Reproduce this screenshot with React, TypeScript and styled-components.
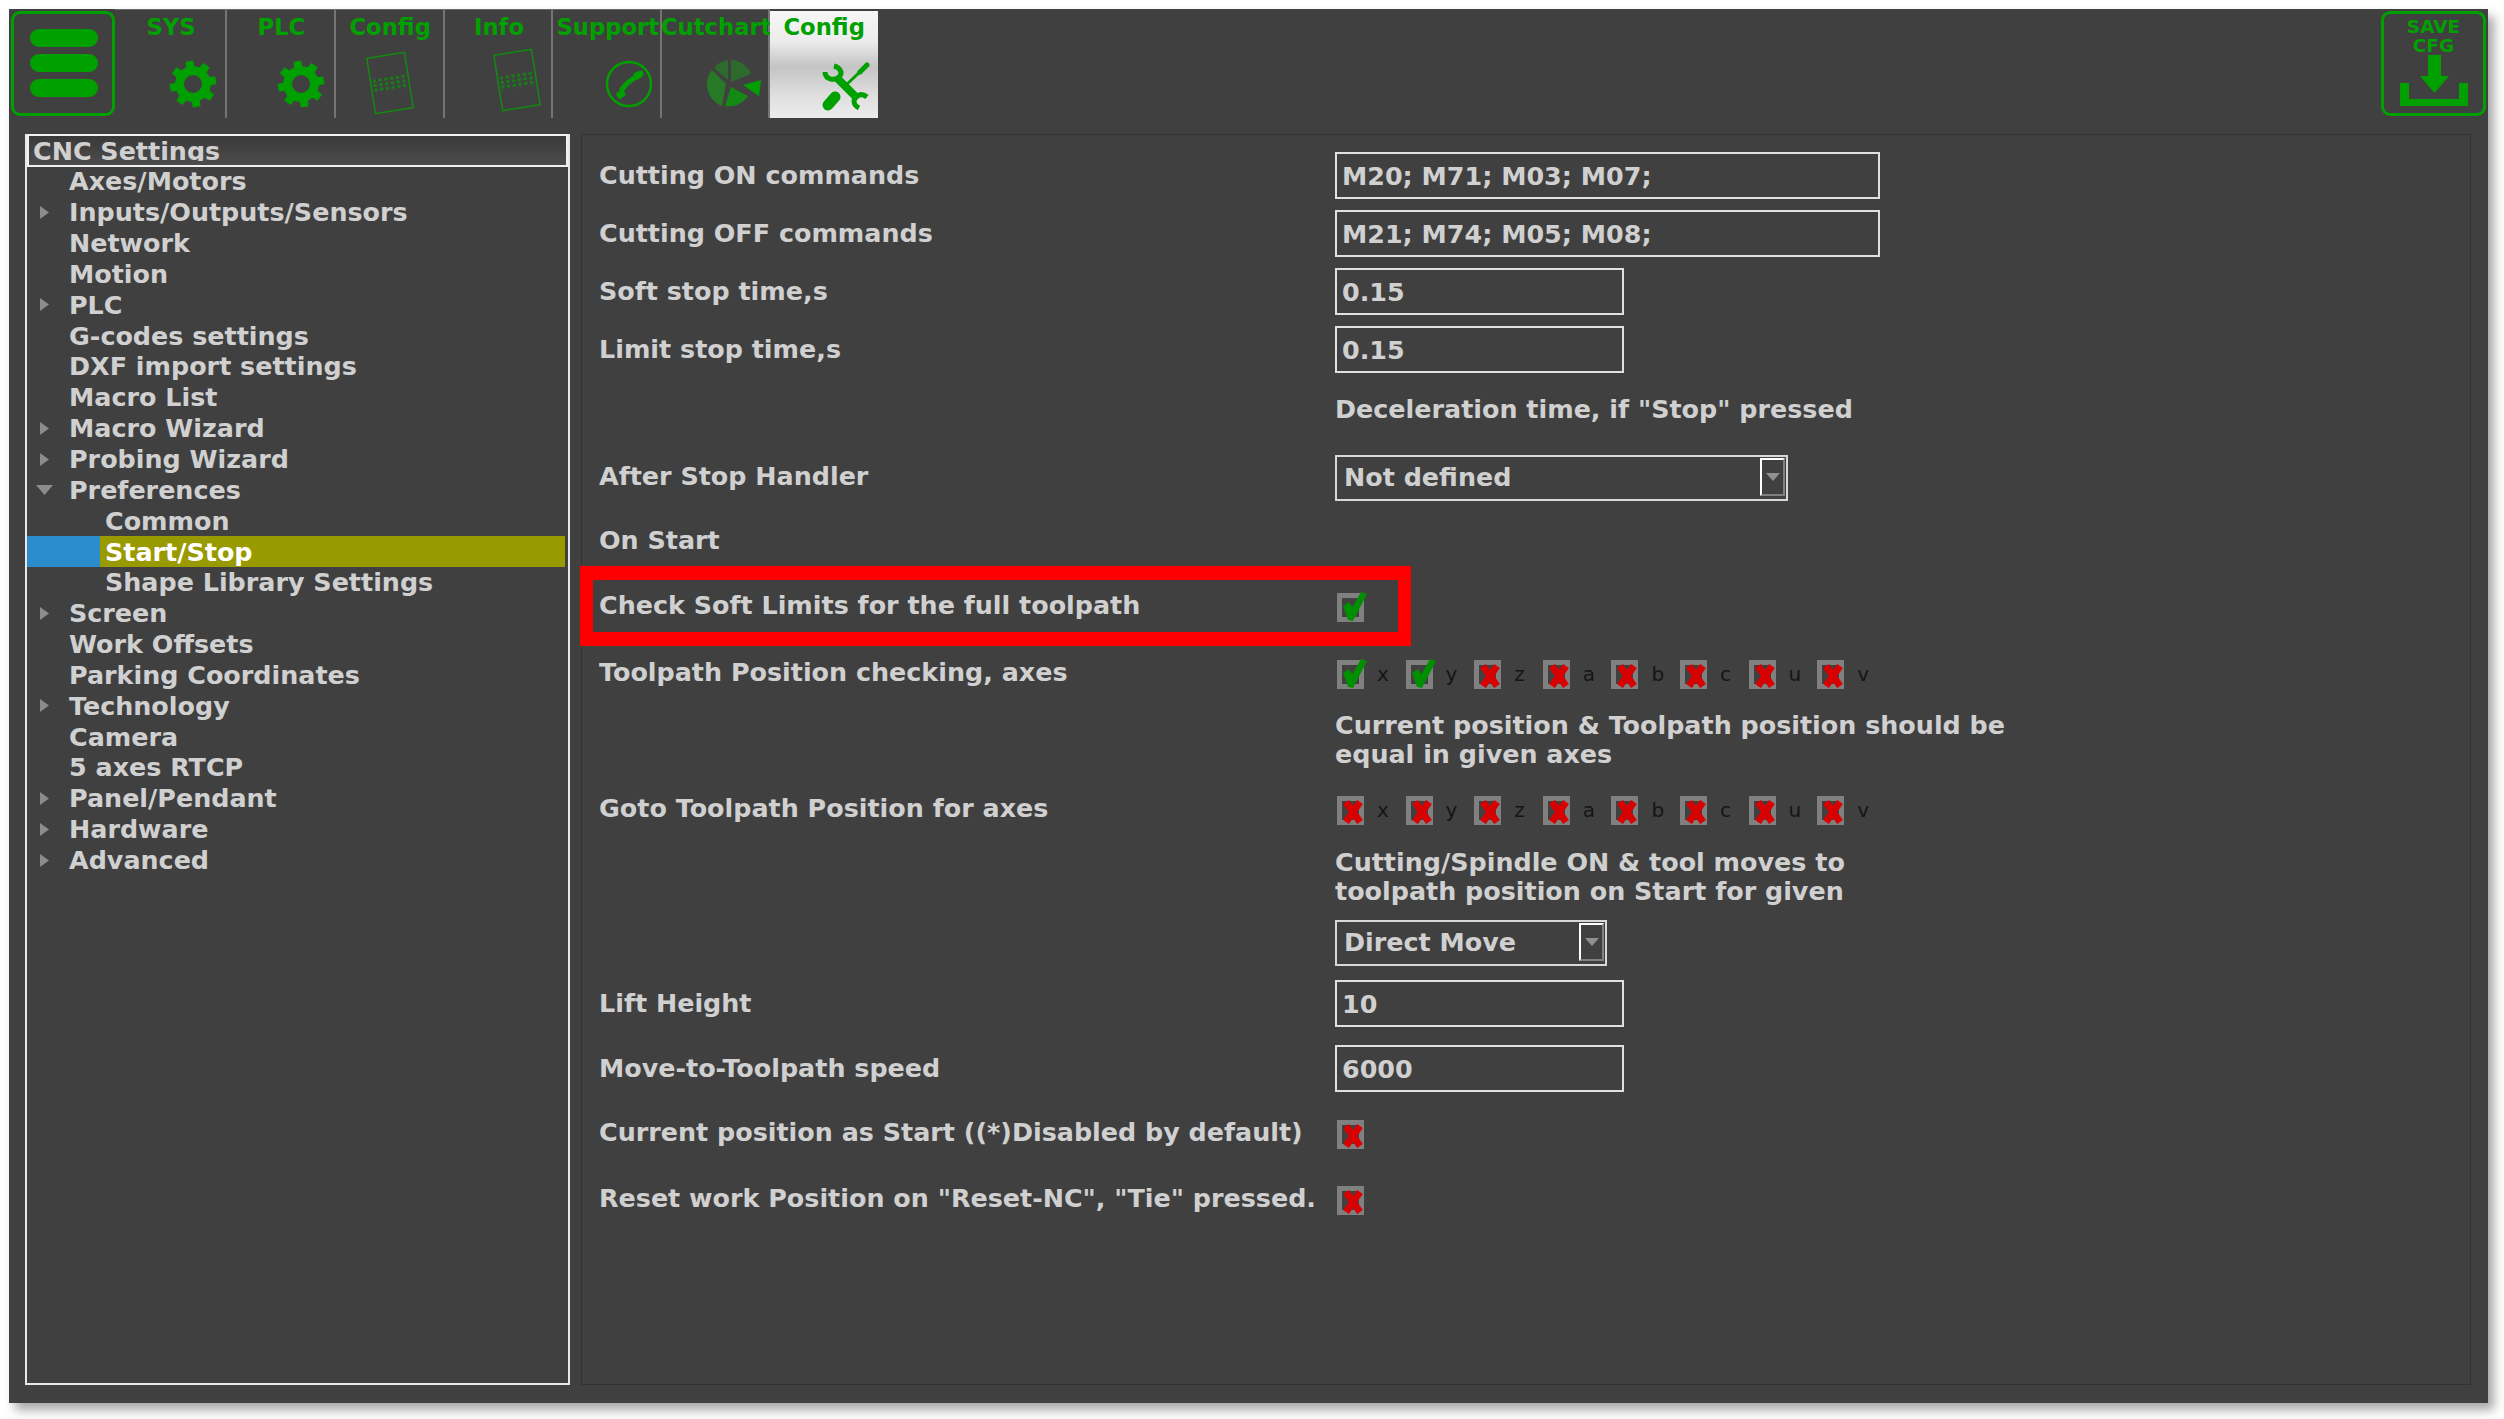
import React from "react";
import styled, { createGlobalStyle } from "styled-components";

const Global = createGlobalStyle`
  html, body { margin: 0; padding: 0; background: #fff; width: 2504px; height: 1419px; overflow: hidden; }
  * { box-sizing: border-box; }
`;

const GREEN = "#00a000";
const FS = "25.4px";

const Page = styled.div`
  width: 2504px;
  height: 1419px;
  padding: 9px 16px 16px 9px;
  font-family: "DejaVu Sans", sans-serif;
`;
const Win = styled.div`
  width: 2479px;
  height: 1394px;
  background: #404040;
  box-shadow: 6px 7px 10px rgba(0, 0, 0, 0.35);
  display: flex;
  flex-direction: column;
`;
const Toolbar = styled.div`
  height: 125px;
  display: flex;
  align-items: flex-start;
`;
const MenuBtn = styled.div`
  width: 104px;
  height: 105px;
  margin: 2px 0 0 2px;
  border: 3px solid ${GREEN};
  border-radius: 9px;
  display: flex;
  flex-direction: column;
  gap: 7px;
  padding: 15px 14px 0 16px;
  flex: none;
`;
const MenuBar = styled.div`
  height: 18px;
  border-radius: 9px;
  background: ${GREEN};
`;
const Tab = styled.div<{ $active?: boolean; $w?: number }>`
  width: ${(p) => p.$w ?? 108.8}px;
  height: ${(p) => (p.$active ? 107 : 109)}px;
  margin-top: ${(p) => (p.$active ? 2 : 0)}px;
  padding-left: ${(p) => (p.$active ? 0 : 2)}px;
  flex: none;
  display: flex;
  flex-direction: column;
  align-items: center;
  color: ${GREEN};
  font-size: 22.7px;
  font-weight: 700;
  line-height: 30px;
  white-space: nowrap;
  border-right: ${(p) => (p.$active ? "none" : "2px solid #747474")};
  border-top: ${(p) => (p.$active ? "none" : "1px solid #6a6a6a")};
  background: ${(p) =>
    p.$active ? "linear-gradient(#f6f6f6 0%, #ececec 28%, #c4c4c4 52%, #dedede 78%, #ececec 100%)" : "transparent"};
`;
const TabLabel = styled.div<{ $active?: boolean }>`
  flex: none;
  height: ${(p) => (p.$active ? 32 : 33)}px;
  padding-top: ${(p) => (p.$active ? 1 : 2)}px;
`;
const TabIcon = styled.svg<{ $dx: number; $top: number }>`
  margin-left: ${(p) => p.$dx}px;
  margin-top: ${(p) => p.$top}px;
  flex: none;
`;
const Spacer = styled.div`
  flex: 1;
`;
const SaveBtn = styled.div`
  width: 105px;
  height: 105px;
  border: 3px solid ${GREEN};
  border-radius: 9px;
  color: ${GREEN};
  font-size: 18.5px;
  line-height: 19px;
  font-weight: 700;
  text-align: center;
  margin: 2px 2px 0 0;
  display: flex;
  flex-direction: column;
  align-items: center;
  padding-top: 3px;
  flex: none;
`;
const SaveIcon = styled.svg`
  flex: none;
`;
const Main = styled.div`
  flex: 1;
  display: flex;
  padding: 0 17px 18px 16px;
  gap: 11px;
  align-items: stretch;
`;
const Tree = styled.div`
  width: 545px;
  border: 2px solid #e8e8e8;
  border-top: none;
  flex: none;
  display: flex;
  flex-direction: column;
`;
const TreeHeader = styled.div`
  height: 33px;
  margin-bottom: -1px;
  border: 2px solid #f0f0f0;
  background: linear-gradient(#3a3a3a, #4c4c4c);
  flex: none;
`;
const TreeHeaderText = styled.div`
  height: 25px;
  overflow: hidden;
  color: #d0d0d0;
  font-weight: 700;
  font-size: ${FS};
  line-height: 31px;
  padding-left: 4px;
  white-space: nowrap;
`;
const TreeRow = styled.div<{ $level: number; $sel?: boolean }>`
  height: 30.85px;
  position: relative;
  display: flex;
  align-items: center;
  color: ${(p) => (p.$sel ? "#ffffff" : "#d0d0d0")};
  font-weight: 700;
  font-size: ${FS};
  white-space: nowrap;
  padding-left: ${(p) => (p.$level === 2 ? 78 : 42)}px;
  flex: none;
  margin-right: ${(p) => (p.$sel ? 3 : 0)}px;
  background: ${(p) =>
    p.$sel ? "linear-gradient(90deg, #2d8ccb 0, #2d8ccb 73px, #999900 73px, #999900 100%)" : "transparent"};
`;
const TreeArrow = styled.svg`
  position: absolute;
  left: 9px;
  top: 8px;
`;
const Pane = styled.div`
  flex: 1;
  border: 1px solid #333333;
  padding-top: 13px;
  padding-left: 17px;
  position: relative;
`;
const FormRow = styled.div<{ $h: number }>`
  height: ${(p) => p.$h}px;
  display: flex;
  align-items: center;
`;
const Label = styled.div`
  width: 736px;
  flex: none;
  color: #d0d0d0;
  font-weight: 700;
  font-size: ${FS};
  white-space: nowrap;
  position: relative;
  top: -2px;
`;
const Input = styled.div<{ $w: number }>`
  width: ${(p) => p.$w}px;
  height: 47px;
  border: 2px solid #e0e0e0;
  color: #d0d0d0;
  font-weight: 700;
  font-size: ${FS};
  line-height: 44px;
  padding-left: 5px;
  white-space: nowrap;
  position: relative;
  top: -2px;
`;
const Combo = styled.div<{ $w: number }>`
  width: ${(p) => p.$w}px;
  height: 46px;
  border: 2px solid #d8d8d8;
  color: #d0d0d0;
  font-weight: 700;
  font-size: ${FS};
  line-height: 41px;
  padding-left: 7px;
  display: flex;
  justify-content: space-between;
`;
const ComboBtn = styled.div`
  width: 25px;
  height: 38px;
  margin: 1px 1px 0 0;
  border: 2px solid #ffffff;
  border-right-color: #808080;
  border-bottom-color: #808080;
  display: flex;
  align-items: center;
  justify-content: center;
`;
const Help = styled.div`
  color: #d0d0d0;
  font-weight: 700;
  font-size: ${FS};
  line-height: 29.5px;
  white-space: pre;
  position: relative;
  top: -1px;
`;
const Axes = styled.div`
  display: flex;
`;
const Axis = styled.div`
  width: 68.6px;
  display: flex;
  align-items: center;
  gap: 13px;
  color: #151515;
  font-size: 20px;
  font-weight: 400;
`;
const CheckBox = styled.div`
  width: 27px;
  height: 29px;
  margin-left: 2px;
  border: 5px solid #808080;
  position: relative;
  flex: none;
`;
const Mark = styled.svg`
  position: absolute;
  left: -5px;
  top: -7px;
`;
const RedBox = styled.div`
  position: absolute;
  left: -2px;
  top: 431px;
  width: 831px;
  height: 80px;
  border-style: solid;
  border-color: #ff0000;
  border-width: 14px 13px;
  pointer-events: none;
`;

const gearPath = (() => {
  const n = 8;
  const cx = 24, cy = 24;
  const ro = 23.5, ri = 18;
  const rot = -0.16;
  let d = "";
  for (let i = 0; i < n; i++) {
    const a = (i / n) * Math.PI * 2 + rot;
    const w = Math.PI / n;
    const pts = [
      [ri, a - w * 0.6],
      [ro, a - w * 0.42],
      [ro, a + w * 0.42],
      [ri, a + w * 0.6],
    ];
    pts.forEach(([r, t], j) => {
      const x = (cx + r * Math.sin(t)).toFixed(2);
      const y = (cy - r * Math.cos(t)).toFixed(2);
      d += `${i === 0 && j === 0 ? "M" : "L"}${x} ${y} `;
    });
  }
  d += "Z M24 15 A9 9 0 1 0 24 33 A9 9 0 1 0 24 15 Z";
  return d;
})();

const Gear = ({ dx }: { dx: number }) => (
  <TabIcon $dx={dx} $top={17} width="48" height="48" viewBox="0 0 48 48">
    <path d={gearPath} fill={GREEN} fillRule="evenodd" />
  </TabIcon>
);

const Chip = ({ dx, top }: { dx: number; top: number }) => (
  <TabIcon $dx={dx} $top={top} width="60" height="66" viewBox="0 0 60 66">
    <g transform="rotate(-9 30 33)" fill="none" stroke="#128a12">
      <rect x="11" y="5" width="38" height="56" strokeWidth="1.5" />
      {[0, 1, 2, 3, 4, 5].map((i) => (
        <line
          key={i}
          x1={15 + i * 5.8}
          x2={15 + i * 5.8}
          y1="27"
          y2="41"
          strokeWidth="3.4"
          strokeDasharray="3 1.6"
          stroke="#1a7a1a"
        />
      ))}
    </g>
  </TabIcon>
);

const Phone = () => (
  <TabIcon $dx={42} $top={17} width="48" height="48" viewBox="0 0 48 48">
    <circle cx="24" cy="24" r="22" fill="none" stroke={GREEN} strokeWidth="2.4" />
    <path d="M16 31 C20 24 25 20 33 16" fill="none" stroke={GREEN} strokeWidth="5" />
    <path d="M11 33 L18 29 L21 35 L15 39 Q12 38 11 33 Z" fill={GREEN} />
    <path d="M28 14 Q33 10 38 11 Q39 15 37 17 L32 20 Z" fill={GREEN} />
  </TabIcon>
);

const Pie = () => (
  <TabIcon $dx={37} $top={16} width="56" height="50" viewBox="0 0 56 50">
    <path d="M24 23 L24 1 A22 22 0 0 1 44 15 Z" fill="#2d6b2d" />
    <path d="M21 21 L21 1 A22 22 0 0 0 7 9 Z" fill="#2d6b2d" />
    <path d="M19 25 L5 11 A23 23 0 0 0 15 47 Z" fill="#267a26" />
    <path d="M24 28 L18 47 A23 23 0 0 0 41 37 Z" fill="#148a14" />
    <path d="M36 26 L54 21 L52 37 Z" fill={GREEN} />
  </TabIcon>
);

const Tools = () => (
  <TabIcon $dx={46} $top={19} width="50" height="50" viewBox="0 0 50 50">
    <g fill="none" stroke={GREEN}>
      <path d="M15 16 L36 37" strokeWidth="8" />
      <path d="M3 10 C3 17 12 20 18 14 C21 10 17 5 12 4" strokeWidth="5" />
      <path d="M45 35 C39 30 32 34 32 39 C32 43 35 45 37 46" strokeWidth="5" />
      <path d="M22 25 L43 5" strokeWidth="3" />
      <path d="M38 10 L45 3" strokeWidth="5" strokeLinecap="round" />
      <path d="M6 43 L13 35" strokeWidth="11" strokeLinecap="round" />
    </g>
  </TabIcon>
);

const Save = () => (
  <SaveIcon width="70" height="52" viewBox="0 0 70 52">
    <path d="M29 0 H42 V21 H50 L35.5 38 L21 21 H29 Z" fill={GREEN} />
    <path d="M1 28 H10 V44 H60 V28 H69 V51 H1 Z" fill={GREEN} />
  </SaveIcon>
);

const Check = () => (
  <Mark width="36" height="38" viewBox="0 0 36 38">
    <path d="M6 15 L12 11 L15.5 16 L24 1 L30 3 L16 30 L11 29 Z" fill="#008f00" />
  </Mark>
);
const Cross = () => (
  <Mark width="36" height="38" viewBox="0 0 36 38">
    <path d="M9 8 L23 28 M23 8 L9 28" fill="none" stroke="#d80000" strokeWidth="7" />
  </Mark>
);

const Box = ({ on }: { on: boolean }) => <CheckBox>{on ? <Check /> : <Cross />}</CheckBox>;

const letters = ["x", "y", "z", "a", "b", "c", "u", "v"];
const AxesRow = ({ on }: { on: string[] }) => (
  <Axes>
    {letters.map((l) => (
      <Axis key={l}>
        <Box on={on.includes(l)} />
        {l}
      </Axis>
    ))}
  </Axes>
);

type T = { t: string; lvl?: number; a?: "r" | "d"; sel?: boolean };
const tree: T[] = [
  { t: "Axes/Motors" },
  { t: "Inputs/Outputs/Sensors", a: "r" },
  { t: "Network" },
  { t: "Motion" },
  { t: "PLC", a: "r" },
  { t: "G-codes settings" },
  { t: "DXF import settings" },
  { t: "Macro List" },
  { t: "Macro Wizard", a: "r" },
  { t: "Probing Wizard", a: "r" },
  { t: "Preferences", a: "d" },
  { t: "Common", lvl: 2 },
  { t: "Start/Stop", lvl: 2, sel: true },
  { t: "Shape Library Settings", lvl: 2 },
  { t: "Screen", a: "r" },
  { t: "Work Offsets" },
  { t: "Parking Coordinates" },
  { t: "Technology", a: "r" },
  { t: "Camera" },
  { t: "5 axes RTCP" },
  { t: "Panel/Pendant", a: "r" },
  { t: "Hardware", a: "r" },
  { t: "Advanced", a: "r" },
];

const ComboArrow = () => (
  <svg width="14" height="8" viewBox="0 0 14 8">
    <path d="M0 0 H14 L7 8 Z" fill="#909090" />
  </svg>
);

export default function App() {
  return (
    <>
      <Global />
      <Page>
        <Win>
          <Toolbar>
            <MenuBtn>
              <MenuBar />
              <MenuBar />
              <MenuBar />
            </MenuBtn>
            <Tab $w={112}>
              <TabLabel>SYS</TabLabel>
              <Gear dx={44} />
            </Tab>
            <Tab>
              <TabLabel>PLC</TabLabel>
              <Gear dx={40} />
            </Tab>
            <Tab>
              <TabLabel>Config</TabLabel>
              <Chip dx={0} top={7} />
            </Tab>
            <Tab>
              <TabLabel>Info</TabLabel>
              <Chip dx={36} top={4} />
            </Tab>
            <Tab>
              <TabLabel>Support</TabLabel>
              <Phone />
            </Tab>
            <Tab $w={108}>
              <TabLabel>Cutchart</TabLabel>
              <Pie />
            </Tab>
            <Tab $active $w={108}>
              <TabLabel $active>Config</TabLabel>
              <Tools />
            </Tab>
            <Spacer />
            <SaveBtn>
              <div>SAVE</div>
              <div>CFG</div>
              <Save />
            </SaveBtn>
          </Toolbar>
          <Main>
            <Tree>
              <TreeHeader>
                <TreeHeaderText>CNC Settings</TreeHeaderText>
              </TreeHeader>
              {tree.map((r) => (
                <TreeRow key={r.t} $level={r.lvl ?? 1} $sel={r.sel}>
                  {r.a === "r" && (
                    <TreeArrow width="18" height="15" viewBox="0 0 18 15">
                      <path d="M4 1 L13 7.5 L4 14 Z" fill="#8c8c8c" />
                    </TreeArrow>
                  )}
                  {r.a === "d" && (
                    <TreeArrow width="18" height="15" viewBox="0 0 18 15">
                      <path d="M0 3 H17 L8.5 13 Z" fill="#8c8c8c" />
                    </TreeArrow>
                  )}
                  {r.t}
                </TreeRow>
              ))}
            </Tree>
            <Pane>
              <FormRow $h={58}>
                <Label>Cutting ON commands</Label>
                <Input $w={545}>M20; M71; M03; M07;</Input>
              </FormRow>
              <FormRow $h={58}>
                <Label>Cutting OFF commands</Label>
                <Input $w={545}>M21; M74; M05; M08;</Input>
              </FormRow>
              <FormRow $h={58}>
                <Label>Soft stop time,s</Label>
                <Input $w={289}>0.15</Input>
              </FormRow>
              <FormRow $h={58}>
                <Label>Limit stop time,s</Label>
                <Input $w={289}>0.15</Input>
              </FormRow>
              <FormRow $h={62}>
                <Label />
                <Help>Deceleration time, if "Stop" pressed</Help>
              </FormRow>
              <FormRow $h={72}>
                <Label>After Stop Handler</Label>
                <Combo $w={453}>
                  Not defined
                  <ComboBtn>
                    <ComboArrow />
                  </ComboBtn>
                </Combo>
              </FormRow>
              <FormRow $h={56}>
                <Label>On Start</Label>
              </FormRow>
              <FormRow $h={74}>
                <Label>Check Soft Limits for the full toolpath</Label>
                <Box on />
              </FormRow>
              <FormRow $h={60}>
                <Label>Toolpath Position checking, axes</Label>
                <AxesRow on={["x", "y"]} />
              </FormRow>
              <FormRow $h={74}>
                <Label />
                <Help>{"Current position & Toolpath position should be\nequal in given axes"}</Help>
              </FormRow>
              <FormRow $h={64}>
                <Label>Goto Toolpath Position for axes</Label>
                <AxesRow on={[]} />
              </FormRow>
              <FormRow $h={72}>
                <Label />
                <Help>{"Cutting/Spindle ON & tool moves to\ntoolpath position on Start for given"}</Help>
              </FormRow>
              <FormRow $h={58}>
                <Label />
                <Combo $w={272}>
                  Direct Move
                  <ComboBtn>
                    <ComboArrow />
                  </ComboBtn>
                </Combo>
              </FormRow>
              <FormRow $h={66}>
                <Label>Lift Height</Label>
                <Input $w={289}>10</Input>
              </FormRow>
              <FormRow $h={64}>
                <Label>Move-to-Toolpath speed</Label>
                <Input $w={289}>6000</Input>
              </FormRow>
              <FormRow $h={64}>
                <Label>Current position as Start ((*)Disabled by default)</Label>
                <Box on={false} />
              </FormRow>
              <FormRow $h={68}>
                <Label>Reset work Position on "Reset-NC", "Tie" pressed.</Label>
                <Box on={false} />
              </FormRow>
              <RedBox />
            </Pane>
          </Main>
        </Win>
      </Page>
    </>
  );
}
